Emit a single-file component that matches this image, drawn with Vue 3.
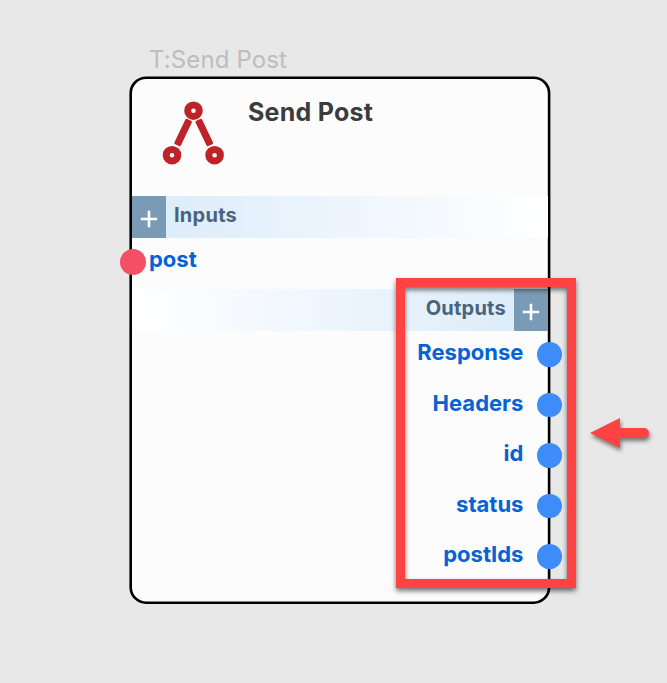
<script setup>
const outputs = ['Response', 'Headers', 'id', 'status', 'postIds']
</script>

<template>
  <main class="canvas">
    <div class="node-label">T:Send Post</div>

    <section class="node">
      <svg class="frame" width="422" height="529" viewBox="129 76 422 529">
        <rect x="130.7" y="77.7" width="418.4" height="525" rx="15.5" fill="#fcfcfc" stroke="#000" stroke-width="2.6" />
      </svg>

      <header class="head">
        <svg class="logo" width="64" height="68" viewBox="161 98 64 68">
          <g fill="none" stroke="#be2328" stroke-width="7">
            <circle cx="193.5" cy="110.7" r="5.8" />
            <circle cx="172" cy="155.2" r="5.8" />
            <circle cx="214.6" cy="155.2" r="5.8" />
          </g>
          <g fill="#be2328">
            <rect x="-3.6" y="-14" width="7.2" height="28" rx="1.5" transform="translate(183.1 132.5) rotate(25.500)" />
            <rect x="-3.6" y="-14" width="7.2" height="28" rx="1.5" transform="translate(204.3 132.5) rotate(-25.500)" />
          </g>
        </svg>
        <h1 class="title">Send Post</h1>
      </header>

      <div class="band inputs">
        <button class="add" aria-label="Add input">
          <svg width="18" height="18" viewBox="0 0 18 18"><path d="M9 .8v16.400M.8 9h16.400" stroke="#fff" stroke-width="2.6" /></svg>
        </button>
        <span class="band-name">Inputs</span>
      </div>

      <div class="input-row">
        <i class="port in"></i>
        <span class="port-name">post</span>
      </div>

      <div class="band outputs">
        <span class="band-name">Outputs</span>
        <button class="add" aria-label="Add output">
          <svg width="18" height="18" viewBox="0 0 18 18"><path d="M9 .8v16.400M.8 9h16.400" stroke="#fff" stroke-width="2.6" /></svg>
        </button>
      </div>

      <ul class="output-list">
        <li v-for="name in outputs" :key="name">
          <span class="port-name">{{ name }}</span>
          <i class="port out"></i>
        </li>
      </ul>
    </section>

    <div class="highlight"></div>
    <svg class="arrow" width="72" height="46" viewBox="585 412 72 46">
      <path d="M590 433L620 418v10h24a5 5 0 0 1 0 10H620v10z" fill="#ff4343" />
    </svg>
  </main>
</template>

<style>
body {
  background: #e8e8e8;
}
</style>

<style scoped>
.canvas {
  position: relative;
  width: 667px;
  height: 683px;
  overflow: hidden;
  background: #e8e8e8;
  font-family: Inter, "Liberation Sans", sans-serif;
  font-feature-settings: "calt" 0;
}
.node-label {
  position: absolute;
  left: 149px;
  top: 45px;
  font-size: 24px;
  line-height: 30px;
  letter-spacing: 0.12px;
  color: #bdbdbd;
  white-space: nowrap;
}
.node {
  position: absolute;
  left: 129px;
  top: 76px;
  width: 422px;
  height: 529px;
}
.frame {
  position: absolute;
  inset: 0;
}
.head {
  position: relative;
  display: flex;
  gap: 23px;
  height: 120px;
  box-sizing: border-box;
  padding: 22px 0 0 32px;
}
.title {
  margin: -1px 0 0;
  font-size: 25px;
  line-height: 30px;
  font-weight: 700;
  letter-spacing: 0.25px;
  color: #3c3c3c;
}
.band {
  position: relative;
  display: flex;
  height: 42px;
  margin: 0 3px;
}
.inputs {
  background: linear-gradient(to right, #d9ebf8, #edf5fd 50%, #fff);
}
.outputs {
  justify-content: flex-end;
  background: linear-gradient(to left, #d9ebf8, #edf5fd 50%, #fff);
}
.add {
  display: flex;
  align-items: center;
  justify-content: center;
  width: 34px;
  height: 42px;
  padding: 4px 0 0;
  border: 0;
  background: #799bb6;
}
.band-name {
  padding: 0 8px;
  font-size: 20px;
  line-height: 38px;
  font-weight: 700;
  letter-spacing: 0.25px;
  color: #4a637d;
}
.input-row {
  position: relative;
  display: flex;
  align-items: center;
  height: 51px;
  margin-left: -9px;
  gap: 3px;
}
.port {
  flex: none;
  border-radius: 50%;
}
.in {
  width: 26px;
  height: 26px;
  margin-top: -4px;
  background: #f45065;
}
.port-name {
  font-size: 22px;
  line-height: 28px;
  font-weight: 700;
  color: #0563d5;
  margin-top: -8.6px;
}
.output-list {
  position: relative;
  margin: 0 -11px 0 0;
  padding: 0;
  list-style: none;
}
.output-list li {
  display: flex;
  align-items: center;
  justify-content: flex-end;
  gap: 14px;
  height: 50.6px;
}
.out {
  width: 24.6px;
  height: 24.6px;
  margin-top: -4px;
  background: #3e8bfa;
}
.highlight {
  position: absolute;
  left: 396px;
  top: 278px;
  width: 162px;
  height: 292px;
  border: 9px solid #ff4343;
  filter: drop-shadow(0 3px 2.5px rgba(0, 0, 0, 0.55));
}
.arrow {
  position: absolute;
  left: 585px;
  top: 412px;
  filter: drop-shadow(1px 3px 2px rgba(0, 0, 0, 0.5));
}
</style>
